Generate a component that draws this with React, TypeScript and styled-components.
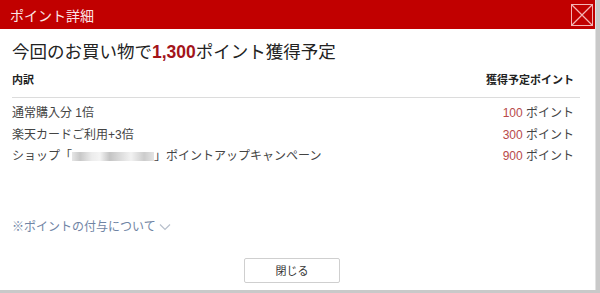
import { FC } from "react";
import styled, { createGlobalStyle } from "styled-components";

const GlobalStyle = createGlobalStyle`
  body {
    margin: 0;
    background: #ffffff;
    font-family: "Liberation Sans", "Noto Sans CJK JP", sans-serif;
  }
`;

const rows = [
  { label: "通常購入分 1倍", points: 100 },
  { label: "楽天カードご利用+3倍", points: 300 },
  { label: "shop", points: 900 },
];

const App: FC = () => {
  return (
    <>
      <GlobalStyle />
      <Frame>
        <Dialog>
          <Header>
            <Title>ポイント詳細</Title>
            <CloseBox aria-label="close">
              <svg width="22" height="22" viewBox="0 0 22 22">
                <rect x="0.5" y="0.5" width="21" height="21" fill="none" stroke="#f4b4b4" />
                <path d="M1 1 L21 21 M21 1 L1 21" stroke="#f4b4b4" strokeWidth="1.2" />
              </svg>
            </CloseBox>
          </Header>

          <Body>
            <Heading>
              今回のお買い物で<Strong>1,300</Strong>ポイント獲得予定
            </Heading>

            <TableHead>
              <span>内訳</span>
              <span>獲得予定ポイント</span>
            </TableHead>

            <RowList>
              {rows.map((row) => (
                <Row key={row.label}>
                  {row.label === "shop" ? (
                    <span>
                      ショップ「<Blur />」ポイントアップキャンペーン
                    </span>
                  ) : (
                    <span>{row.label}</span>
                  )}
                  <span>
                    <Points>{row.points}</Points> ポイント
                  </span>
                </Row>
              ))}
            </RowList>

            <InfoLink href="#">
              ※ポイントの付与について
              <svg width="12" height="8" viewBox="0 0 12 8">
                <path d="M1 1.5 L6 6.5 L11 1.5" fill="none" stroke="#b8c0cc" strokeWidth="1.2" />
              </svg>
            </InfoLink>

            <Footer>
              <Button type="button">閉じる</Button>
            </Footer>
          </Body>
        </Dialog>
      </Frame>
    </>
  );
};

const Frame = styled.div`
  width: 600px;
  height: 293px;
  box-sizing: border-box;
  background: #c9c9c9;
  padding: 0 4px 3px 0;
`;

const Dialog = styled.div`
  display: flex;
  flex-direction: column;
  height: 100%;
  background: #ffffff;
  border-right: 1px solid #e2e2e2;
`;

const Header = styled.div`
  display: flex;
  align-items: center;
  justify-content: space-between;
  height: 29px;
  padding: 0 2px 0 10px;
  background: #c10000;
`;

const Title = styled.h2`
  margin: 0;
  color: #fbe6e6;
  font-size: 14px;
  font-weight: 400;
`;

const CloseBox = styled.div`
  display: flex;
  width: 22px;
  height: 22px;
`;

const Body = styled.div`
  display: flex;
  flex-direction: column;
  flex: 1;
  padding: 12px 15px 0 12px;
  color: #333333;
`;

const Heading = styled.h1`
  margin: 0 0 9px;
  font-size: 17.5px;
  line-height: 22px;
  font-weight: 400;
  color: #222222;
`;

const Strong = styled.strong`
  color: #a3141a;
  font-weight: 700;
`;

const TableHead = styled.div`
  display: flex;
  justify-content: space-between;
  padding: 0 6px 9px 0;
  border-bottom: 1px solid #dcdcdc;
  font-size: 11px;
  line-height: 16px;
  font-weight: 700;
  color: #222222;
`;

const RowList = styled.div`
  display: flex;
  flex-direction: column;
  padding-top: 5px;
`;

const Row = styled.div`
  display: flex;
  justify-content: space-between;
  padding-right: 6px;
  font-size: 12px;
  line-height: 21.5px;
  color: #444444;
`;

const Blur = styled.span`
  display: inline-block;
  width: 82px;
  height: 9px;
  vertical-align: -1px;
  background: linear-gradient(
    90deg,
    #e6e6e6 0%,
    #c8c8c8 10%,
    #ececec 24%,
    #f4f4f4 34%,
    #c4c4c4 46%,
    #dadada 58%,
    #f2f2f2 72%,
    #cccccc 88%,
    #e4e4e4 100%
  );
  filter: blur(0.6px);
`;

const Points = styled.span`
  color: #b84a4a;
`;

const InfoLink = styled.a`
  display: flex;
  align-items: center;
  gap: 3px;
  margin-top: 50px;
  font-size: 12px;
  line-height: 18px;
  color: #6f84a4;
  text-decoration: none;
`;

const Footer = styled.div`
  display: flex;
  justify-content: center;
  margin-top: 22px;
  padding-right: 8px;
`;

const Button = styled.button`
  width: 96px;
  height: 25px;
  border: 1px solid #cfcfcf;
  border-radius: 2px;
  background: #ffffff;
  font-family: "Liberation Sans", "Noto Sans CJK JP", sans-serif;
  font-size: 11px;
  color: #333333;
`;

export default App;
